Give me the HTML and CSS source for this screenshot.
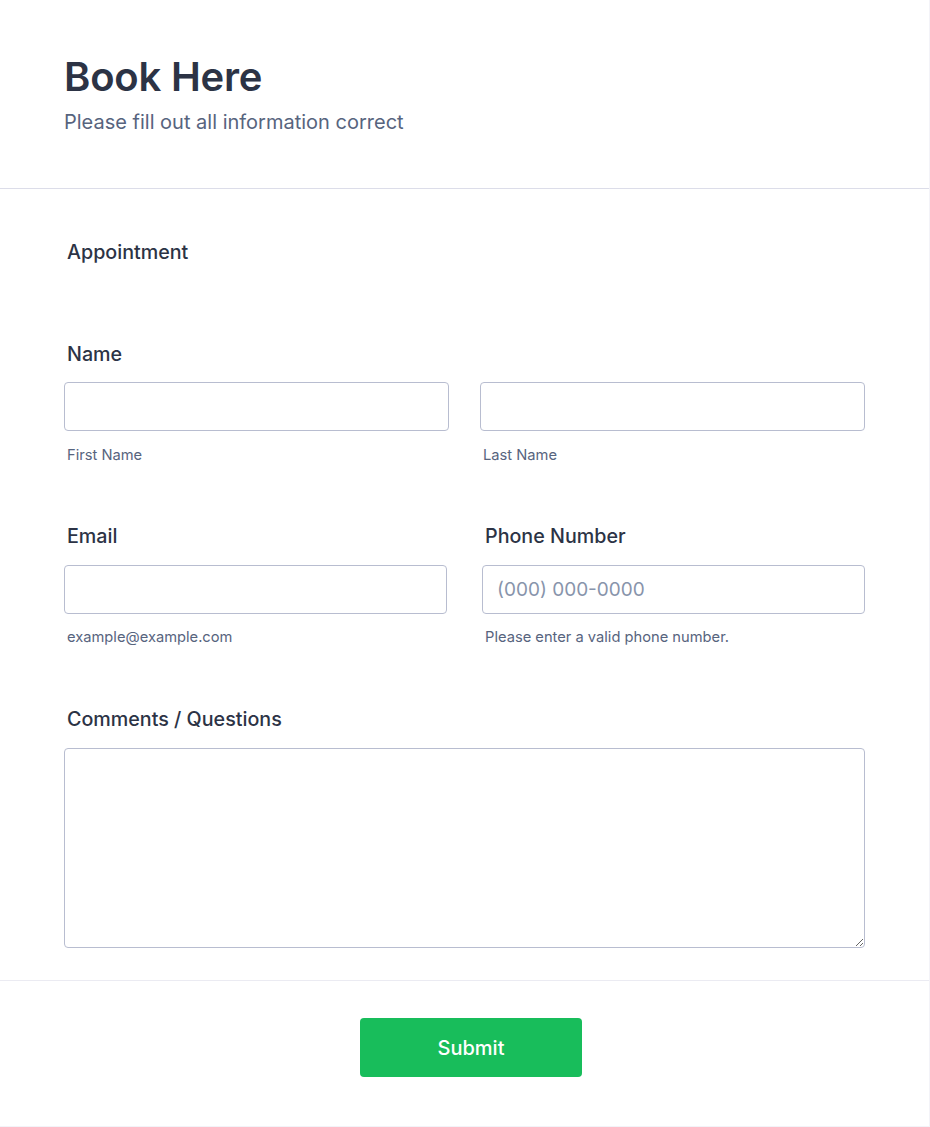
FILE: index.html
```html
<!DOCTYPE html>
<html lang="en">
<head>
<meta charset="utf-8">
<title>Book Here</title>
<link rel="stylesheet" href="styles.css">
</head>
<body>
<form class="card">
  <header class="form-header">
    <h1 class="title">Book Here</h1>
    <p class="subtitle">Please fill out all information correct</p>
  </header>
  <section class="form-body">
    <h2 class="section-title">Appointment</h2>

    <div class="field field-name">
      <label class="label">Name</label>
      <div class="row row-name">
        <div class="col">
          <input class="input" type="text">
          <span class="sublabel">First Name</span>
        </div>
        <div class="col">
          <input class="input" type="text">
          <span class="sublabel">Last Name</span>
        </div>
      </div>
    </div>

    <div class="row row-contact">
      <div class="field col">
        <label class="label">Email</label>
        <input class="input" type="email">
        <span class="sublabel">example@example.com</span>
      </div>
      <div class="field col">
        <label class="label">Phone Number</label>
        <input class="input" type="tel" placeholder="(000) 000-0000">
        <span class="sublabel">Please enter a valid phone number.</span>
      </div>
    </div>

    <div class="field field-comments">
      <label class="label">Comments / Questions</label>
      <textarea class="textarea"></textarea>
    </div>
  </section>
  <footer class="form-footer">
    <button type="button" class="submit">Submit</button>
  </footer>
</form>
</body>
</html>
```

FILE: styles.css
```css
* { box-sizing: border-box; }
html, body { margin: 0; padding: 0; }
body {
  background: #f3f3f8;
  font-family: Inter, "Noto Sans", "Liberation Sans", sans-serif;
  color: #2c3345;
}
.card {
  width: 929px;
  height: 1126px;
  background: #ffffff;
  display: flex;
  flex-direction: column;
}
.form-header {
  padding: 53px 64px 0;
  height: 189px;
  border-bottom: 1px solid #dcdde9;
}
.title {
  margin: 0;
  font-size: 40px;
  line-height: 48px;
  font-weight: 600;
  color: #2c3345;
  letter-spacing: -0.2px;
}
.subtitle {
  margin: 9px 0 0;
  font-size: 20px;
  line-height: 24px;
  color: #57647e;
}
.form-body {
  padding: 0 64px 32px;
  border-bottom: 1px solid #ebebf2;
}
.section-title {
  margin: 51px 0 0 3px;
  font-size: 19.7px;
  line-height: 24px;
  font-weight: 500;
  color: #2c3345;
}
.field { display: flex; flex-direction: column; }
.field-name { margin-top: 78px; }
.label {
  display: block;
  margin-left: 3px;
  font-size: 19.7px;
  line-height: 24px;
  font-weight: 500;
  color: #2c3345;
}
.row { display: grid; grid-template-columns: 1fr 1fr; }
.row-name { column-gap: 31px; margin-top: 16px; }
.row-contact { column-gap: 35px; margin-top: 60px; }
.col { display: flex; flex-direction: column; }
.row-contact .input { margin-top: 17px; }
.input {
  height: 49px;
  width: 100%;
  border: 1px solid #b8bdd0;
  border-radius: 4px;
  padding: 0 14px;
  font-family: inherit;
  font-size: 19px;
  color: #2c3345;
  background: #fff;
}
.input::placeholder { color: #8894ab; }
.sublabel {
  display: block;
  margin: 15px 0 0 3px;
  font-size: 14.7px;
  line-height: 18px;
  color: #57647e;
}
.row-contact .sublabel { margin-top: 14px; }
.field-comments { margin-top: 61px; }
.textarea {
  display: block;
  margin-top: 17px;
  height: 200px;
  width: 100%;
  border: 1px solid #b8bdd0;
  border-radius: 4px;
  padding: 10px 14px;
  font-family: inherit;
  font-size: 18px;
  resize: vertical;
}
.form-footer {
  display: flex;
  justify-content: center;
  padding-top: 37px;
}
.submit {
  width: 222px;
  height: 59px;
  margin-left: 13px;
  border: none;
  border-radius: 4px;
  background: #18bd5b;
  color: #ffffff;
  font-family: inherit;
  font-size: 20px;
  font-weight: 500;
}
```
